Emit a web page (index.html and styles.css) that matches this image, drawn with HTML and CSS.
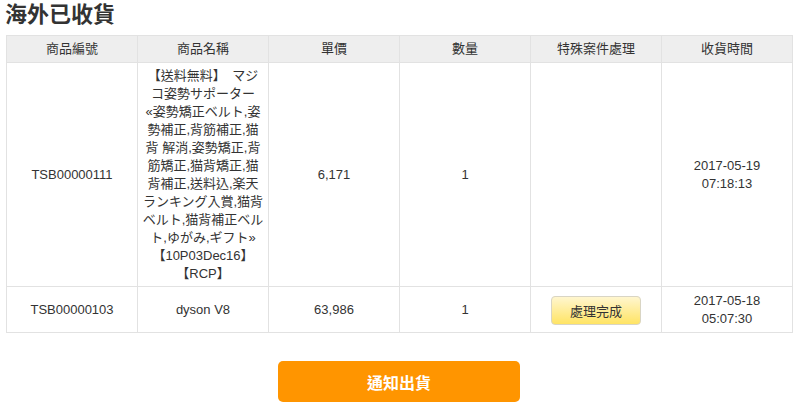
FILE: index.html
```html
<!DOCTYPE html>
<html lang="zh-Hant">
<head>
<meta charset="utf-8">
<title>海外已收貨</title>
<link rel="stylesheet" href="styles.css">
</head>
<body>
<div class="page">
  <h1 class="title">海外已收貨</h1>
  <table class="orders">
    <thead>
      <tr>
        <th>商品編號</th>
        <th>商品名稱</th>
        <th>單價</th>
        <th>數量</th>
        <th>特殊案件處理</th>
        <th>收貨時間</th>
      </tr>
    </thead>
    <tbody>
      <tr>
        <td>TSB00000111</td>
        <td class="name">【送料無料】　マジ<br>コ姿勢サポーター<br>«姿勢矯正ベルト,姿<br>勢補正,背筋補正,猫<br>背 解消,姿勢矯正,背<br>筋矯正,猫背矯正,猫<br>背補正,送料込,楽天<br>ランキング入賞,猫背<br>ベルト,猫背補正ベル<br>ト,ゆがみ,ギフト»<br>【10P03Dec16】<br>【RCP】</td>
        <td>6,171</td>
        <td>1</td>
        <td></td>
        <td>2017-05-19<br>07:18:13</td>
      </tr>
      <tr>
        <td>TSB00000103</td>
        <td>dyson V8</td>
        <td>63,986</td>
        <td>1</td>
        <td><button class="btn-done" type="button">處理完成</button></td>
        <td>2017-05-18<br>05:07:30</td>
      </tr>
    </tbody>
  </table>
  <div class="actions">
    <button class="btn-notify" type="button">通知出貨</button>
  </div>
</div>
</body>
</html>
```

FILE: styles.css
```css
html, body {
  margin: 0;
  padding: 0;
  background: #fff;
}

body {
  font-family: "Liberation Sans", "Noto Sans CJK TC", sans-serif;
  color: #333;
  font-size: 13px;
}

.page {
  padding: 0 7px 0 6px;
}

.title {
  margin: 0 0 5px -1px;
  padding-top: 0;
  font-size: 22px;
  line-height: 30px;
  font-weight: bold;
  color: #333;
}

.orders {
  width: 100%;
  table-layout: fixed;
  border-collapse: collapse;
}

.orders th,
.orders td {
  border: 1px solid #e2e2e2;
  text-align: center;
  vertical-align: middle;
  line-height: 18px;
  font-size: 13px;
}

.orders th {
  background: #eeeeee;
  font-weight: normal;
  padding: 4px 4px;
}

.orders td {
  padding: 4px 4px 3px;
}

.orders .name {
  white-space: nowrap;
}

.btn-done {
  font-family: inherit;
  font-size: 13px;
  color: #333;
  width: 90px;
  height: 29px;
  margin: 5px 0 4px;
  padding: 0;
  border: 1px solid #d9d5c4;
  border-radius: 4px;
  background: linear-gradient(#fff6cf, #ffe464);
  vertical-align: middle;
}

.actions {
  display: flex;
  justify-content: center;
  padding-top: 28px;
}

.btn-notify {
  font-family: inherit;
  font-size: 16px;
  font-weight: bold;
  color: #fff;
  width: 242px;
  height: 41px;
  border: none;
  border-radius: 5px;
  background: #ff9500;
  margin-left: -1px;
}
```
